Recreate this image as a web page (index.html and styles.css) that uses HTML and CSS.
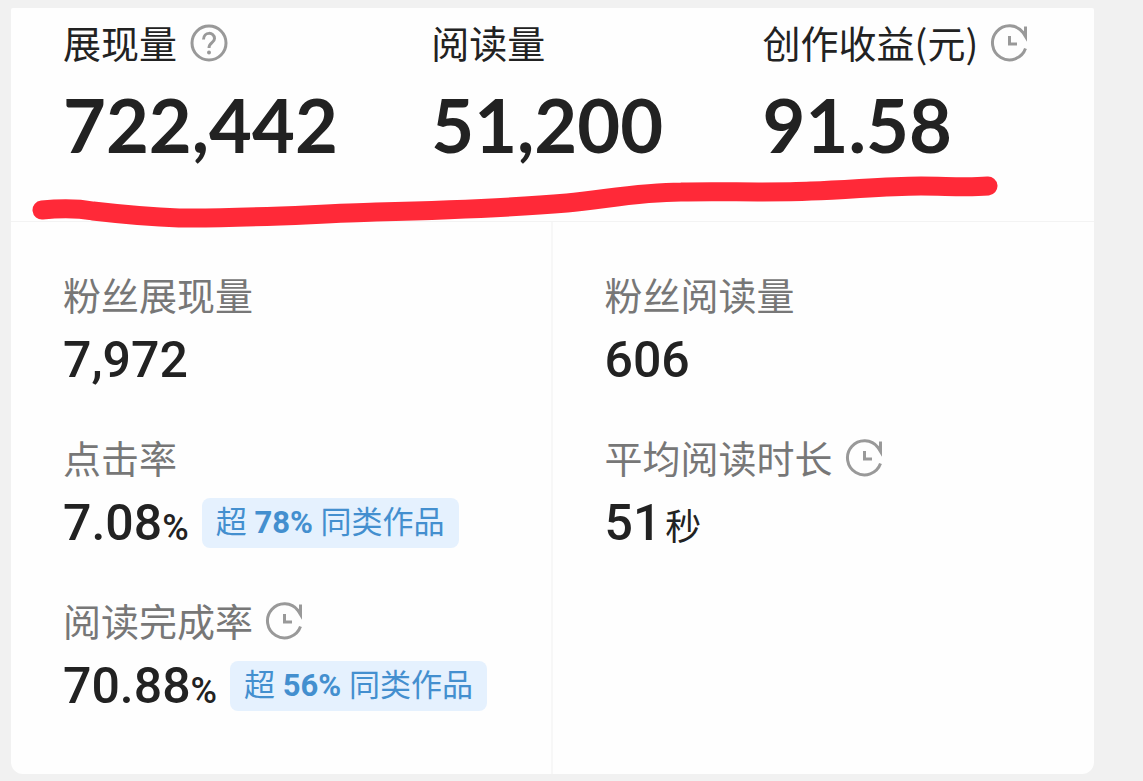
FILE: index.html
```html
<!DOCTYPE html>
<html lang="zh-CN">
<head>
    <meta charset="UTF-8">
    <meta name="viewport" content="width=device-width, initial-scale=1.0">
    <title>作品数据</title>
    <link rel="stylesheet" href="styles.css">
</head>
<body>
    <svg class="symbols" aria-hidden="true">
        <symbol id="icon-help" viewBox="0 0 40 40">
            <circle cx="20" cy="20" r="17"/>
            <path d="M14.500 16.500C14.500 8.500 25.500 8.500 25.500 15.500C25.500 20 20 19.500 20 25"/>
            <circle class="dot" cx="20" cy="29.500" r="2"/>
        </symbol>
        <symbol id="icon-clock" viewBox="0 0 40 40">
            <path d="M35.500 3.500V13.500L33 9.500A17 17 0 1 0 35.500 25.500"/>
            <path d="M19.500 13V21H27"/>
        </symbol>
    </svg>

    <main class="card">
        <section class="summary">
            <div class="summary-item first">
                <div class="label">展现量 <svg class="icon"><use href="#icon-help"/></svg></div>
                <div class="total">722,442</div>
            </div>
            <div class="summary-item">
                <div class="label">阅读量</div>
                <div class="total">51,200</div>
            </div>
            <div class="summary-item">
                <div class="label">创作收益(元) <svg class="icon"><use href="#icon-clock"/></svg></div>
                <div class="total">91.58</div>
            </div>
            <svg class="marker" viewBox="0 0 1083 230" aria-hidden="true">
                <path d="M31 202C50 200 66 200 82 203C108 206 140 209 168 210C230 211 300 206 365 204C440 202 510 199 556 195C596 191 630 184 670 184C710 183 760 185 800 183C840 182 870 178 910 178C935 178 955 180 977 178"/>
            </svg>
        </section>

        <section class="details">
            <div class="column">
                <div class="metric">
                    <div class="label">粉丝展现量</div>
                    <div class="value">7,972</div>
                </div>
                <div class="metric">
                    <div class="label">点击率</div>
                    <div class="value">
                        <span>7.08<small>%</small></span>
                        <span class="badge">超 <b>78%</b> 同类作品</span>
                    </div>
                </div>
                <div class="metric">
                    <div class="label">阅读完成率 <svg class="icon"><use href="#icon-clock"/></svg></div>
                    <div class="value">
                        <span>70.88<small>%</small></span>
                        <span class="badge">超 <b>56%</b> 同类作品</span>
                    </div>
                </div>
            </div>
            <div class="column">
                <div class="metric">
                    <div class="label">粉丝阅读量</div>
                    <div class="value">606</div>
                </div>
                <div class="metric">
                    <div class="label">平均阅读时长 <svg class="icon"><use href="#icon-clock"/></svg></div>
                    <div class="value"><span>51<small class="unit">秒</small></span></div>
                </div>
            </div>
        </section>
    </main>
</body>
</html>
```

FILE: styles.css
```css
* {
    box-sizing: border-box;
}

body {
    margin: 0;
    padding: 8px 49px 7px 11px;
    background: #f1f1f1;
    color: #222;
    font-family: Roboto, "Noto Sans CJK SC", sans-serif;
}

.symbols {
    display: none;
}

.card {
    background: #fefefe;
    border-radius: 2px 2px 12px 12px;
}

/* top totals */
.summary {
    position: relative;
    display: flex;
    padding: 10px 0 56px 52px;
    border-bottom: 1px solid #f3f3f3;
}

.summary-item {
    flex: 9 0 0;
}

.summary-item.first {
    flex-grow: 10;
}

.label {
    display: flex;
    align-items: center;
    gap: 12px;
    height: 48px;
    font-family: "Noto Sans CJK SC", sans-serif;
    font-size: 38px;
    line-height: 48px;
    white-space: nowrap;
}

.icon {
    width: 40px;
    height: 40px;
    margin-top: 2px;
    fill: none;
    stroke: #999;
    stroke-width: 3;
}

.dot {
    fill: #999;
    stroke: none;
}

.total {
    margin-top: 19px;
    font-family: Lato, sans-serif;
    font-size: 74px;
    font-weight: 700;
    line-height: 80px;
}

.marker {
    position: absolute;
    top: 0;
    left: 0;
    width: 100%;
    fill: none;
    stroke: #ff2938;
    stroke-width: 19;
    stroke-linecap: round;
    pointer-events: none;
}

/* detail columns */
.details {
    display: grid;
    grid-template-columns: 1fr 1fr;
}

.column {
    display: flex;
    flex-direction: column;
    gap: 45px;
    padding: 48px 0 60px 52px;
}

.column:first-child {
    border-right: 2px solid #f7f7f7;
}

.details .label {
    color: #777;
}

.value {
    display: flex;
    align-items: center;
    gap: 13px;
    height: 56px;
    margin-top: 14px;
    font-size: 50px;
    font-weight: 500;
    line-height: 56px;
    white-space: nowrap;
}

.value small {
    font-size: 36px;
    line-height: 36px;
}

.value .unit {
    margin-left: 4px;
    font-weight: 400;
}

.badge {
    height: 50px;
    padding: 0 14px;
    border-radius: 8px;
    background: #e5f1fe;
    color: #438fcf;
    font-size: 31px;
    font-weight: 400;
    line-height: 50px;
}

.badge b {
    font-weight: 700;
}
```
